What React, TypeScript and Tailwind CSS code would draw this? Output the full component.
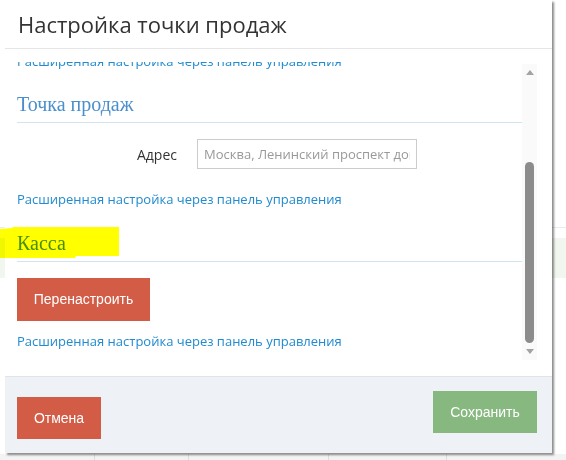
import React from "react";

const linkText = "Расширенная настройка через панель управления";

function Link({ className = "" }: { className?: string }) {
  return (
    <a className={`block text-[13px] leading-[20px] text-[#218bd0] whitespace-nowrap ${className}`}>{linkText}</a>
  );
}

export default function App() {
  return (
    <div className="relative w-[566px] h-[460px] overflow-hidden bg-white font-['Open_Sans','Noto_Sans',sans-serif]">
      {/* page behind the modal */}
      <div className="absolute inset-0 flex flex-col">
        <div className="h-[227px]" />
        <div className="h-[11px] border-t border-[#ececec]" />
        <div className="h-[40px] bg-[#f1f7ee]" />
        <div className="flex-1" />
        <div className="h-[6px] flex bg-[#f3f3f3]">
          <div className="w-[94px]" />
          <div className="w-[94px] border-l border-[#dedede]" />
          <div className="w-[140px] border-l border-[#dedede]" />
          <div className="w-[118px] border-l border-[#dedede]" />
          <div className="flex-1 border-l border-[#dedede]" />
        </div>
      </div>

      {/* modal */}
      <div className="absolute left-[5px] top-0 w-[547px] h-[453px] bg-white flex flex-col shadow-[2px_2px_2px_rgba(0,0,0,0.45)]">
        <div className="h-[49px] shrink-0 border-b border-[#e5e5e5] pl-[13px] pt-[9px]">
          <h4 className="text-[22px] leading-[30px] text-[#333]">Настройка точки продаж</h4>
        </div>

        <div className="h-[327px] shrink-0 flex pl-[12px] pr-[15px] pt-[13px]">
          <div className="w-[505px] h-[299px] overflow-hidden flex flex-col">
            <Link className="mt-[-11px]" />
            <div className="mt-[21px] pb-[6px] border-b border-[#d3e3ef] font-['Liberation_Serif',serif] text-[20px] leading-[24px] text-[#4a8fcc]">
              Точка продаж
            </div>
            <div className="mt-[16px] flex items-center">
              <label className="w-[160px] text-right text-[14px] text-[#333]">Адрес</label>
              <input
                className="ml-[20px] w-[220px] h-[30px] border border-[#cccccc] px-[6px] text-[13px] text-[#555] placeholder:text-[#999] outline-none"
                placeholder="Москва, Ленинский проспект дом 1"
              />
            </div>
            <Link className="mt-[20px]" />
            <div className="mt-[22px] pb-[6px] border-b border-[#d3e3ef] font-['Liberation_Serif',serif] text-[20px] leading-[24px] text-[#4a8fcc]">
              Касса
            </div>
            <button className="mt-[16px] w-[133px] h-[43px] shrink-0 bg-[#d35c47] text-white text-[14px] font-['Liberation_Sans',sans-serif]">
              Перенастроить
            </button>
            <Link className="mt-[10px]" />
          </div>
          <div className="mt-[2px] w-[15px] h-[296px] bg-[#fafafa] flex flex-col items-center pt-[6px]">
            <div className="w-0 h-0 border-x-[4px] border-x-transparent border-b-[5px] border-b-[#a3a3a3]" />
            <div className="mt-[87px] w-[9px] h-[181px] rounded-full bg-[#8c8c8c]" />
            <div className="mt-[6px] w-0 h-0 border-x-[4px] border-x-transparent border-t-[5px] border-t-[#a3a3a3]" />
          </div>
        </div>

        <div className="flex-1 border-t border-[#dfe3ea] bg-[#eef1f6] flex justify-between items-start pl-[12px] pr-[15px] font-['Liberation_Sans',sans-serif]">
          <button className="mt-[20px] w-[84px] h-[42px] bg-[#d35c47] text-white text-[14px]">Отмена</button>
          <button className="mt-[14px] w-[104px] h-[42px] bg-[#87b880] text-white text-[14px]">Сохранить</button>
        </div>
      </div>

      {/* yellow marker highlight */}
      <div className="absolute left-0 top-[227px] w-[119px] h-[31px] bg-[#ffff00] mix-blend-multiply [clip-path:polygon(0_2px,12px_1px,13px_0,100%_0,100%_29px,76px_29px,75px_31px,0_31px)]" />
    </div>
  );
}
